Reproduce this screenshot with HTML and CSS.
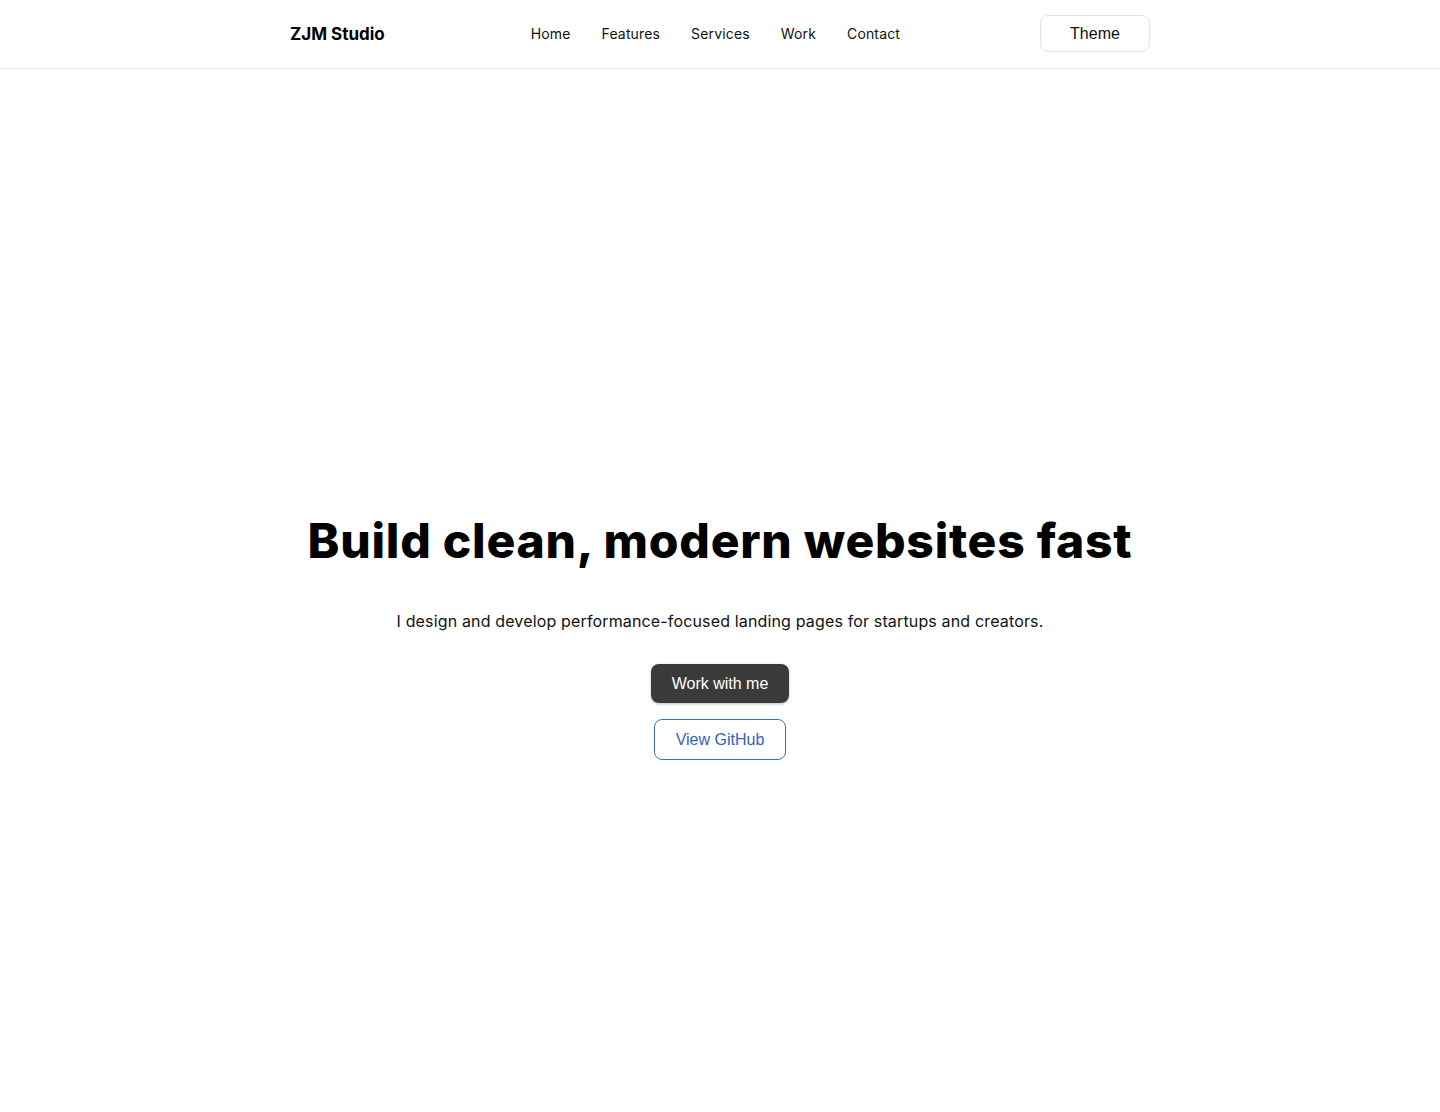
FILE: index.html
```html
<!DOCTYPE html>
<html lang="en">
<head>
<meta charset="utf-8">
<title>ZJM Studio</title>
<link rel="stylesheet" href="styles.css">
</head>
<body>
<header class="site-header">
  <div class="container header-inner">
    <a class="logo" href="#">ZJM Studio</a>
    <nav class="nav">
      <a href="#">Home</a>
      <a href="#">Features</a>
      <a href="#">Services</a>
      <a href="#">Work</a>
      <a href="#">Contact</a>
    </nav>
    <button class="theme-btn">Theme</button>
  </div>
</header>
<main class="hero">
  <h1 class="hero-title">Build clean, modern websites fast</h1>
  <p class="hero-sub">I design and develop performance-focused landing pages for startups and creators.</p>
  <div class="hero-actions">
    <button class="btn-primary">Work with me</button>
    <button class="btn-outline">View GitHub</button>
  </div>
</main>
</body>
</html>
```
FILE: styles.css
```css
* { box-sizing: border-box; }
html, body { margin: 0; padding: 0; background: #fff; }
body { font-family: Inter, "Noto Sans", sans-serif; color: #111; }

.site-header {
  border-bottom: 1px solid #e6e6e6;
  height: 69px;
}
.container {
  width: 860px;
  margin: 0 auto;
}
.header-inner {
  height: 68px;
  display: flex;
  align-items: center;
  justify-content: space-between;
}
.logo {
  font-weight: 700;
  font-size: 17px;
  color: #000;
  text-decoration: none;
}
.nav {
  display: flex;
  gap: 31px;
  margin-top: -2px;
  margin-left: 6px;
}
.nav a {
  font-size: 14px;
  letter-spacing: 0.15px;
  color: #111;
  text-decoration: none;
}
.theme-btn {
  width: 110px;
  height: 37px;
  margin-top: -1px;
  background: #fff;
  border: 1px solid #e4e4e4;
  border-radius: 8px;
  font-family: "Liberation Sans", Arial, sans-serif;
  font-size: 16px;
  color: #111;
}

.hero {
  display: flex;
  flex-direction: column;
  align-items: center;
  text-align: center;
  padding-top: 444px;
}
.hero-title {
  margin: 0;
  font-size: 48px;
  font-weight: 800;
  line-height: 56px;
  color: #000;
  letter-spacing: 0.75px;
}
.hero-sub {
  margin: 40px 0 0;
  font-size: 16px;
  line-height: 24px;
  letter-spacing: 0.15px;
  color: #111;
}
.hero-actions {
  margin-top: 31px;
  display: flex;
  flex-direction: column;
  align-items: center;
  gap: 16px;
}
.btn-primary {
  width: 138px;
  height: 39px;
  background: #3a3a3a;
  color: #fff;
  border: none;
  border-radius: 8px;
  font-family: "Liberation Sans", Arial, sans-serif;
  font-size: 16px;
  box-shadow: 0 1px 3px rgba(0,0,0,0.25);
}
.btn-outline {
  width: 132px;
  height: 41px;
  background: #fff;
  color: #2f63c0;
  border: 1px solid #3b6fc4;
  border-radius: 8px;
  font-family: "Liberation Sans", Arial, sans-serif;
  font-size: 16px;
}
```
